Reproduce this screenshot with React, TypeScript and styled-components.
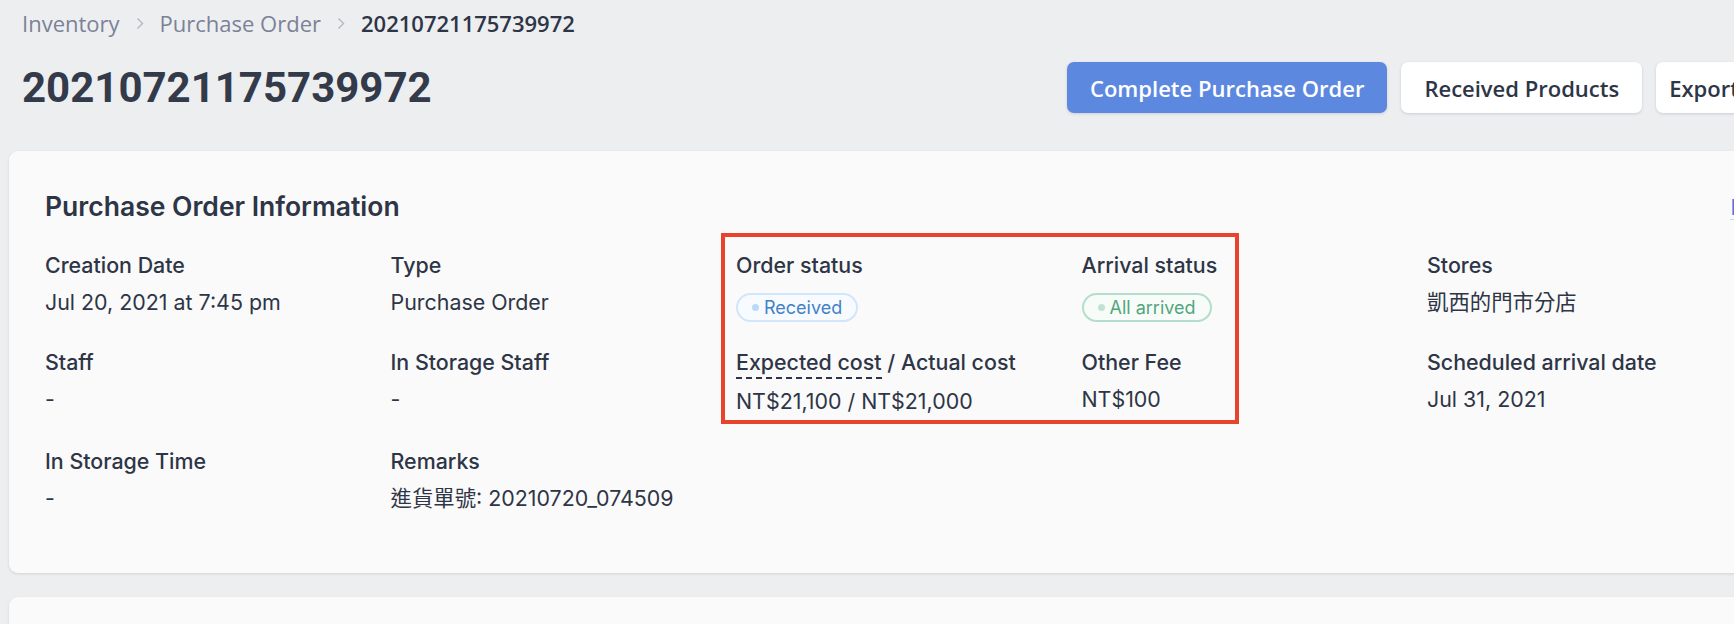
import React, { ReactNode } from "react";
import styled, { createGlobalStyle } from "styled-components";

const GlobalStyle = createGlobalStyle`
  html, body {
    margin: 0;
    background: #edeef0;
    overflow: hidden;
  }

  body {
    font-family: Inter, "Noto Sans CJK TC", sans-serif;
    color: #2e3546;
  }
`;

const Page = styled.div`
  width: 1820px;
`;

const Header = styled.header`
  padding-left: 22px;
`;

const Breadcrumb = styled.nav`
  display: flex;
  align-items: center;
  gap: 16px;
  margin-top: 8px;
  height: 30px;
  font-family: "Open Sans", "Noto Sans", sans-serif;
  font-size: 22px;
`;

const Crumb = styled.span<{ $current?: boolean }>`
  color: ${(p) => (p.$current ? "#2e3546" : "#7b8297")};
  font-weight: ${(p) => (p.$current ? 600 : 400)};
  line-height: 30px;
`;

const TitleRow = styled.div`
  display: grid;
  grid-template-columns: 1045px auto;
  align-items: center;
  margin-top: 24px;
  height: 51px;
`;

const PageTitle = styled.h1`
  margin: 0;
  font-family: Roboto, "Liberation Sans", sans-serif;
  font-size: 42px;
  font-weight: 700;
  line-height: 51px;
  color: #333a4a;
`;

const Actions = styled.div`
  display: flex;
  gap: 14px;
`;

const Button = styled.button<{ $primary?: boolean; $tight?: boolean }>`
  height: 51px;
  padding: ${(p) => (p.$tight ? "0 24px 0 13px" : "0 23px")};
  border: none;
  border-radius: 7px;
  font-family: "Open Sans", "Noto Sans", sans-serif;
  font-size: 22px;
  font-weight: 600;
  white-space: nowrap;
  background: ${(p) => (p.$primary ? "#5d88e0" : "#ffffff")};
  color: ${(p) => (p.$primary ? "#ffffff" : "#2e3546")};
  box-shadow: 0 1px 3px rgba(30, 40, 60, 0.16);
`;

const Card = styled.section`
  position: relative;
  box-sizing: border-box;
  width: 1798px;
  margin: 38px 0 0 9px;
  padding: 39px 36px 60px;
  background: #fafafa;
  border-radius: 9px;
  box-shadow: 0 1px 3px rgba(20, 30, 50, 0.12);
`;

const EmptyCard = styled(Card)`
  margin-top: 24px;
  height: 120px;
`;

const CardHeader = styled.div`
  display: flex;
  justify-content: space-between;
  align-items: center;
`;

const CardTitle = styled.h2`
  margin: 0;
  font-size: 26.5px;
  font-weight: 600;
  line-height: 32px;
  color: #2e3546;
`;

const EditLink = styled.span`
  font-family: "Open Sans", "Noto Sans", sans-serif;
  font-size: 22px;
  font-weight: 600;
  line-height: 26px;
  color: #4a78d6;
  border-bottom: 1px solid #c9d6f2;
`;

const FieldGrid = styled.div`
  display: grid;
  grid-template-columns: repeat(5, 345.5px);
  row-gap: 30px;
  margin-top: 28px;
`;

const Field = styled.div`
  display: flex;
  flex-direction: column;
  gap: 7px;
`;

const Label = styled.div`
  font-size: 21.4px;
  font-weight: 500;
  line-height: 30px;
  white-space: nowrap;
`;

const DashedTerm = styled.span`
  display: inline-block;
  line-height: 30px;
  border-bottom: 2px dashed #2e3546;
`;

const Value = styled.div`
  display: flex;
  align-items: flex-start;
  height: 30px;
  font-size: 21.4px;
  font-weight: 400;
  line-height: 30px;
  white-space: nowrap;
`;

const tones = {
  blue: { border: "#d1e6fb", text: "#3f82c5", dot: "#bcdaf5", bg: "#f7fbff" },
  green: { border: "#b4decb", text: "#53a57d", dot: "#c2e2d2", bg: "#f7fcf9" },
};

type Tone = keyof typeof tones;

const Badge = styled.span<{ $tone: Tone }>`
  display: inline-flex;
  align-items: center;
  gap: 5px;
  box-sizing: border-box;
  height: 29px;
  margin-top: 6px;
  padding: 0 14px 0 14px;
  border: 2px solid ${(p) => tones[p.$tone].border};
  border-radius: 15px;
  background: ${(p) => tones[p.$tone].bg};
  color: ${(p) => tones[p.$tone].text};
  font-size: 18px;
  line-height: 1;
`;

const Dot = styled.span<{ $tone: Tone }>`
  width: 7px;
  height: 7px;
  border-radius: 50%;
  background: ${(p) => tones[p.$tone].dot};
`;

const Highlight = styled.div`
  position: absolute;
  left: 712px;
  top: 82px;
  width: 518px;
  height: 191px;
  box-sizing: border-box;
  border: 4px solid #e8432c;
  pointer-events: none;
`;

const Chevron = () => (
  <svg width="8" height="13" viewBox="0 0 8 13" fill="none">
    <polyline points="1.5,1.5 6.5,6.5 1.5,11.5" stroke="#b3b7c1" strokeWidth="1.4" />
  </svg>
);

type FieldData = {
  label: ReactNode;
  value?: string;
  badge?: { tone: Tone; text: string };
};

const fields: FieldData[] = [
  { label: "Creation Date", value: "Jul 20, 2021 at 7:45 pm" },
  { label: "Type", value: "Purchase Order" },
  { label: "Order status", badge: { tone: "blue", text: "Received" } },
  { label: "Arrival status", badge: { tone: "green", text: "All arrived" } },
  { label: "Stores", value: "凱西的門市分店" },
  { label: "Staff", value: "-" },
  { label: "In Storage Staff", value: "-" },
  {
    label: (
      <>
        <DashedTerm>Expected cost</DashedTerm> / Actual cost
      </>
    ),
    value: "NT$21,100 / NT$21,000",
  },
  { label: "Other Fee", value: "NT$100" },
  { label: "Scheduled arrival date", value: "Jul 31, 2021" },
  { label: "In Storage Time", value: "-" },
  { label: "Remarks", value: "進貨單號: 20210720_074509" },
];

export default function App() {
  return (
    <Page>
      <GlobalStyle />
      <Header>
        <Breadcrumb>
          <Crumb>Inventory</Crumb>
          <Chevron />
          <Crumb>Purchase Order</Crumb>
          <Chevron />
          <Crumb $current>20210721175739972</Crumb>
        </Breadcrumb>
        <TitleRow>
          <PageTitle>20210721175739972</PageTitle>
          <Actions>
            <Button $primary>Complete Purchase Order</Button>
            <Button>Received Products</Button>
            <Button $tight>Export</Button>
          </Actions>
        </TitleRow>
      </Header>

      <Card>
        <CardHeader>
          <CardTitle>Purchase Order Information</CardTitle>
          <EditLink>Edit</EditLink>
        </CardHeader>
        <FieldGrid>
          {fields.map((f, i) => (
            <Field key={i}>
              <Label>{f.label}</Label>
              <Value>
                {f.badge ? (
                  <Badge $tone={f.badge.tone}>
                    <Dot $tone={f.badge.tone} />
                    {f.badge.text}
                  </Badge>
                ) : (
                  f.value
                )}
              </Value>
            </Field>
          ))}
        </FieldGrid>
        <Highlight />
      </Card>

      <EmptyCard />
    </Page>
  );
}
